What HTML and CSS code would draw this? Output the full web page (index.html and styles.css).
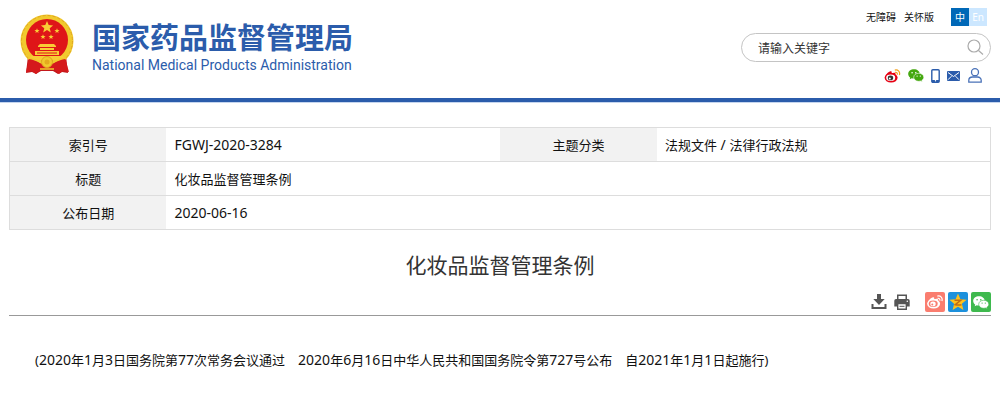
FILE: index.html
```html
<!DOCTYPE html>
<html lang="zh-CN">
<head>
<meta charset="utf-8">
<title>化妆品监督管理条例</title>
<link rel="stylesheet" href="styles.css">
</head>
<body>
<svg class="defs" aria-hidden="true">
  <symbol id="weibo" viewBox="0 0 16 14">
    <ellipse cx="6.600" cy="8.800" rx="6.500" ry="4.800"/>
    <path d="M1 7C2 4 5 1.700 6.500 2.200C8 2.700 6.800 4.500 7 4.600C9 3.500 11 3.600 11 4.800L10.600 6.500C13 7.300 13 9 12 10Z"/>
    <ellipse class="inner" cx="6.200" cy="8.800" rx="4.500" ry="3.200"/>
    <ellipse class="eye" cx="6" cy="8.900" rx="2.700" ry="2.300"/>
    <circle class="inner" cx="5.300" cy="9.400" r="1"/>
    <path class="wave" d="M10.300 1.100C13.600 .3 15.900 3 14.900 6M10.600 3.400C12.300 3 13.200 4.200 12.800 5.600"/>
  </symbol>
  <symbol id="wechat" viewBox="0 0 16 13">
    <path d="M6 .3C2.700 .3 .2 2.300 .2 5c0 1.500.8 2.800 2 3.600L1.700 10.300l2-1c.7.200 1.500.3 2.300.3C9.300 9.600 11.700 7.600 11.700 5S9.300.3 6 .3Z"/>
    <path class="front" d="M10.700 4.300c-2.900 0-5 1.700-5 4s2.100 4 5 4c.7 0 1.300-.1 1.900-.3l1.700.9-.5-1.500c1.200-.7 2-1.800 2-3.100 0-2.300-2.200-4-5.100-4Z"/>
    <g class="dot"><circle cx="4.100" cy="3.700" r=".8"/><circle cx="7.800" cy="3.700" r=".8"/><circle cx="9.100" cy="7.100" r=".65"/><circle cx="12.300" cy="7.100" r=".65"/></g>
  </symbol>
</svg>
<header class="header">
  <a class="brand" href="#">
    <svg class="emblem" viewBox="0 0 54 60" aria-hidden="true">
      <path fill="#c3191c" d="M8 42 6 59l6-1 4 2 5-3h12l5 3 4-2 6 1-2-17Z"/>
      <circle cx="27" cy="27" r="26.500" fill="#f1c92e"/>
      <circle cx="27" cy="27" r="25.500" fill="none" stroke="#e0a520" stroke-dasharray="3 2"/>
      <circle cx="27" cy="26" r="21" fill="#df1518"/>
      <path fill="#f9cc35" d="m27 7 1.700 4.100 4.400.3-3.400 2.800 1.100 4.300-3.800-2.400-3.800 2.400 1.100-4.300-3.400-2.800 4.400-.3Z"/>
      <g fill="#f9cc35">
        <path id="star" d="m17 14.300.7 1.700 1.900.1-1.500 1.200.5 1.800-1.600-1-1.600 1 .5-1.800-1.500-1.200 1.900-.1Z"/>
        <use href="#star" x="20"/><use href="#star" x="6" y="6"/><use href="#star" x="14" y="6"/>
        <path d="m18 32 2-2h14l2 2v1H18Zm2 2h14v2H20Zm-5 3h24v4H15Zm-4 5h32l2 4H9Z"/>
      </g>
      <path fill="none" stroke="#df1518" d="M17 39h20"/>
      <path fill="#d5191c" d="M9 44c5 2 10 3 13 6h10c3-3 8-4 13-6l4 14-6-1-4 3-5-5H21l-5 5-4-3-6 1Z"/>
      <circle cx="27" cy="48" r="5.500" fill="#f1c92e" stroke="#e0a520"/>
      <circle cx="27" cy="48" r="2.500" fill="#e4a91f"/>
      <path fill="none" stroke="#f1c92e" stroke-width="1.500" d="M8 44c5 1 10 2 13 5M46 44c-5 1-10 2-13 5M20 55h14"/>
    </svg>
    <span class="names">
      <span class="name-zh">国家药品监督管理局</span>
      <span class="name-en">National Medical Products Administration</span>
    </span>
  </a>
  <div class="tools">
    <nav class="top-links">
      <a href="#">无障碍</a>
      <a href="#">关怀版</a>
      <span class="lang"><a class="zh" href="#">中</a><a class="en" href="#">En</a></span>
    </nav>
    <form class="search">
      <input type="text" placeholder="请输入关键字" aria-label="请输入关键字">
      <button type="button" aria-label="搜索">
        <svg width="17" height="17" viewBox="0 0 17 17"><circle cx="7" cy="7" r="6"/><path d="m11.500 11.500 4.500 4"/></svg>
      </button>
    </form>
    <nav class="social">
      <a href="#" aria-label="微博"><svg class="weibo" width="17" height="14"><use href="#weibo"/></svg></a>
      <a href="#" aria-label="微信"><svg class="wechat" width="16" height="13"><use href="#wechat"/></svg></a>
      <a href="#" aria-label="手机"><svg width="9" height="14" viewBox="0 0 9 14"><rect x=".8" y=".8" width="7.400" height="12.400" rx="1" fill="#fff" stroke="#2b5cab" stroke-width="1.400"/><path d="M1 11h7v2H1Z" fill="#2b5cab"/><circle cx="4.500" cy="11.700" r=".7" fill="#fff"/></svg></a>
      <a href="#" aria-label="邮箱"><svg width="13" height="10" viewBox="0 0 13 10"><rect width="13" height="10" rx="1" fill="#2b5cab"/><path d="m1 1.500 5.500 4 5.500-4M1 8.700l3.500-3.500M12 8.700 8.500 5.200" fill="none" stroke="#fff"/></svg></a>
      <a class="user" href="#" aria-label="用户"><svg width="14" height="15" viewBox="0 0 14 15"><g fill="none" stroke="#4a72b8" stroke-width="1.300"><circle cx="7" cy="4.200" r="3.500"/><path d="M.8 14.200V12.500C.8 10.300 2.300 9 4.500 9h5c2.200 0 3.700 1.300 3.700 3.500v1.700Z"/></g></svg></a>
    </nav>
  </div>
</header>
<main class="content">
  <table class="info">
    <tr><th scope="row">索引号</th><td><span class="latin">FGWJ-2020-3284</span></td><th scope="row">主题分类</th><td>法规文件<span class="latin"> / </span>法律行政法规</td></tr>
    <tr><th scope="row">标题</th><td colspan="3">化妆品监督管理条例</td></tr>
    <tr><th scope="row">公布日期</th><td colspan="3"><span class="latin">2020-06-16</span></td></tr>
  </table>
  <h1 class="title">化妆品监督管理条例</h1>
  <div class="actions">
    <button type="button" aria-label="下载"><svg width="16" height="16" viewBox="0 0 16 16" fill="#555"><path d="M6 0h4v5h3.700L8 11 2.300 5H6Z"/><path d="M.5 10h2v3h11v-3h2v5H.5Z"/></svg></button>
    <button type="button" aria-label="打印"><svg width="16" height="16" viewBox="0 0 16 16"><path d="M3 5V.5h10V5M2 5h12q1.700 0 1.700 1.700V12.500H.3V6.700Q.3 5 2 5Z" fill="#555"/><path d="M4.500 2h7v3h-7Z" fill="#fff"/><path d="M3.700 9.500h8.600v5.700H3.700Z" fill="#fff" stroke="#555" stroke-width="1.400"/><path d="M5.500 12.300h5" stroke="#555"/><circle cx="13.300" cy="7.200" r=".8" fill="#fff"/></svg></button>
    <div class="share">
      <a class="s-weibo" href="#" aria-label="分享到微博"><svg width="16" height="14"><use href="#weibo"/></svg></a>
      <a class="s-qzone" href="#" aria-label="分享到QQ空间"><svg width="18" height="18" viewBox="0 0 18 18"><path d="m9 .5 2.400 5.700 6.200.6-4.700 4 1.500 6.300L9 13.800l-5.400 3.300 1.500-6.300-4.700-4 6.200-.6Z" fill="#fdc11c"/><path d="M5.500 7.200h6.300l-5.500 4.500q3 .7 6.200 0" fill="none" stroke="#c36e13" stroke-width="1.500"/></svg></a>
      <a class="s-wechat" href="#" aria-label="分享到微信"><svg width="16" height="13"><use href="#wechat"/></svg></a>
    </div>
  </div>
  <p class="passage">(<span class="latin">2020</span>年<span class="latin">1</span>月<span class="latin">3</span>日国务院第<span class="latin">77</span>次常务会议通过　<span class="latin">2020</span>年<span class="latin">6</span>月<span class="latin">16</span>日中华人民共和国国务院令第<span class="latin">727</span>号公布　自<span class="latin">2021</span>年<span class="latin">1</span>月<span class="latin">1</span>日起施行)</p>
</main>
</body>
</html>
```
FILE: styles.css
```css
* { box-sizing: border-box; }
body {
  margin: 0;
  background: #fff;
  color: #111;
  font: 13px/20px "Noto Sans", "Noto Sans CJK SC", sans-serif;
}
a { color: inherit; text-decoration: none; }
svg { display: block; }
button { padding: 0; border: 0; background: none; }
.defs { position: absolute; width: 0; height: 0; }
.latin { font-size: 14px; }

.header {
  display: flex;
  justify-content: space-between;
  align-items: flex-start;
  padding: 8px 9px 15px 20px;
  border-bottom: 4px solid #2b5cab;
  box-shadow: 0 1px #c5d5ee;
}
.brand { display: flex; gap: 18px; padding-top: 6px; color: #2b5cab; }
.emblem { width: 54px; height: 60px; }
.names { display: flex; flex-direction: column; gap: 4px; padding-top: 6px; white-space: nowrap; }
.name-zh { font: bold 29px/32px "Noto Sans CJK SC", sans-serif; }
.name-en { font: 14px/18px Roboto, sans-serif; }

.tools { display: flex; flex-direction: column; width: 250px; }
.top-links {
  display: flex;
  justify-content: flex-end;
  align-items: center;
  gap: 8px;
  padding-right: 4px;
  font-size: 10px;
  line-height: 18px;
}
.lang { display: flex; margin-left: 9px; }
.lang a { width: 18px; text-align: center; color: #fff; }
.zh { background: #0068b7; }
.en { background: #cce7ff; }
.search {
  display: flex;
  align-items: center;
  height: 29px;
  margin-top: 7px;
  padding: 0 6px 0 16px;
  border: 1px solid #c4c4c4;
  border-radius: 15px;
}
.search input {
  flex: 1;
  min-width: 0;
  padding: 0;
  border: 0;
  outline: 0;
  background: none;
  font: 12px "Noto Sans CJK SC", sans-serif;
}
.search input::placeholder { color: #333; opacity: 1; }
.search svg { fill: none; stroke: #aaa; stroke-width: 1.2; }
.social {
  display: flex;
  justify-content: flex-end;
  align-items: center;
  gap: 7px;
  margin-top: 6px;
  padding-right: 9px;
}
.social .user { margin-left: 1px; }
.weibo { --inner: #fff; --eye: #333; --wave: #f4a11b; fill: #e60012; }
.s-weibo { --inner: #fa7d6f; --eye: #fff; --wave: #fff; fill: #fff; }
.inner { fill: var(--inner); }
.eye { fill: var(--eye); }
.wave { fill: none; stroke: var(--wave); stroke-width: 1.2; }
.wechat { --gap: #fff; fill: #45a810; }
.s-wechat { --gap: #3eb94e; fill: #fff; }
.front { stroke: var(--gap); stroke-width: .6; }
.dot { fill: var(--gap); }

.content { padding: 25px 9px 28px; }
.info { width: 100%; border: 1px solid #ddd; border-collapse: collapse; table-layout: fixed; }
.info th, .info td {
  height: 34px;
  padding: 0 8px;
  border: solid #ddd;
  border-width: 1px 0;
  font-weight: normal;
}
.info th { width: 16%; background: #f2f2f2; }
.info td { text-align: left; }
.title {
  margin: 18px 0 12px;
  color: #333;
  font: 21px/32px "Noto Sans CJK SC", sans-serif;
  text-align: center;
}
.actions {
  display: flex;
  justify-content: flex-end;
  align-items: center;
  gap: 7px;
  padding-bottom: 3px;
  border-bottom: 1px solid #999;
}
.share { display: flex; gap: 3px; margin-left: 8px; }
.share a {
  display: flex;
  align-items: center;
  justify-content: center;
  width: 20px;
  height: 20px;
  border-radius: 2px;
}
.s-weibo { background: #fa7d6f; }
.s-qzone { background: #1d91dc; }
.s-wechat { background: #3eb94e; }
.passage { margin: 34px 0 0; padding: 0 26px; }
```
